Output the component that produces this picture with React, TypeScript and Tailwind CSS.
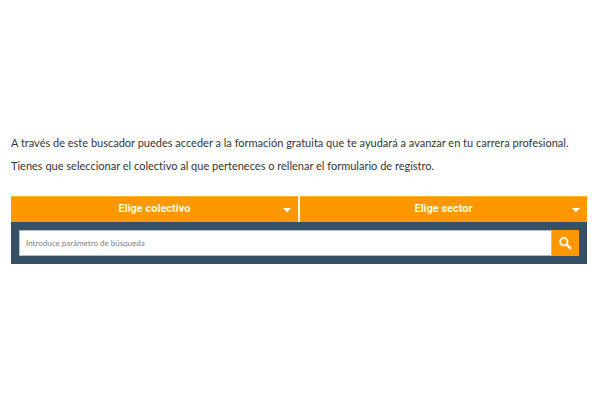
import React, { useState } from "react";

type FilterSelectProps = {
  label: string;
  options: string[];
  value: string;
  onChange: (value: string) => void;
};

function SearchIcon() {
  return (
    <svg viewBox="0 0 13 13" className="h-[13px] w-[13px]" fill="none" stroke="currentColor" aria-hidden="true">
      <circle cx="4.8" cy="4.7" r="3.7" strokeWidth="2" />
      <path d="M7.8 7.7l3.4 3.4" strokeWidth="2.6" strokeLinecap="round" />
    </svg>
  );
}

function FilterSelect({ label, options, value, onChange }: FilterSelectProps) {
  return (
    <div className="relative flex-1 bg-[#ff9800]">
      <select
        aria-label={label}
        value={value}
        onChange={(e) => onChange(e.target.value)}
        className="block h-[26px] w-full cursor-pointer appearance-none border-t border-[#ffb52e] bg-transparent text-center font-['Roboto',sans-serif] text-[11px] font-bold text-[#fff8d8] outline-none [text-align-last:center]"
      >
        <option value="">{label}</option>
        {options.map((option) => (
          <option key={option} value={option} className="text-gray-800">
            {option}
          </option>
        ))}
      </select>
      <svg
        viewBox="0 0 8 5"
        className="pointer-events-none absolute top-3 right-[7px] h-[5px] w-2 fill-[#fffbea]"
        aria-hidden="true"
      >
        <path d="M0 0h8L4 4.5z" />
      </svg>
    </div>
  );
}

export default function App() {
  const [collective, setCollective] = useState("");
  const [sector, setSector] = useState("");
  const [search, setSearch] = useState("");

  return (
    <main className="bg-white pt-[131px] pr-[13px] pl-[11px] font-['Lato',sans-serif] [font-variant-ligatures:none]">
      <div className="text-[11px] leading-[23px] text-[#333638]">
        <p>
          A través de este buscador puedes acceder a la formación gratuita que te ayudará a avanzar en tu carrera
          profesional.
        </p>
        <p>Tienes que seleccionar el colectivo al que perteneces o rellenar el formulario de registro.</p>
      </div>

      <form onSubmit={(e) => e.preventDefault()} className="mt-[19px]">
        <div className="flex gap-[2px] bg-[#fff8e4]">
          <FilterSelect
            label="Elige colectivo"
            options={["Trabajadores", "Autónomos", "Desempleados"]}
            value={collective}
            onChange={setCollective}
          />
          <FilterSelect
            label="Elige sector"
            options={["Comercio", "Hostelería", "Transporte"]}
            value={sector}
            onChange={setSector}
          />
        </div>

        <div className="flex bg-[#365167] px-2 py-2">
          <input
            type="text"
            aria-label="Buscar"
            placeholder="Introduce parámetro de búsqueda"
            value={search}
            onChange={(e) => setSearch(e.target.value)}
            className="h-[26px] min-w-0 flex-1 border border-[#b5bec5] bg-white px-[6px] text-[8px] text-gray-800 outline-none placeholder:text-[#7b8388]"
          />
          <button
            type="submit"
            aria-label="Buscar"
            className="flex h-[26px] w-[27px] cursor-pointer items-center justify-center bg-[#ff9800] text-[#fff8e4]"
          >
            <SearchIcon />
          </button>
        </div>
      </form>
    </main>
  );
}
